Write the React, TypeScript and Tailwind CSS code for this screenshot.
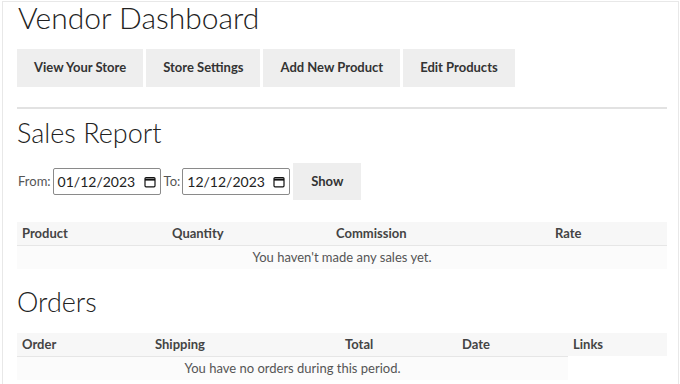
import React from "react";

const font = { fontFamily: "Lato, 'Open Sans', sans-serif" };

function CalendarIcon() {
  return (
    <svg width="12" height="12" viewBox="0 0 12 12" fill="none" stroke="#111" strokeWidth="1.2">
      <rect x="1" y="1.6" width="10" height="9.2" rx="1" />
      <line x1="1" y1="3.6" x2="11" y2="3.6" strokeWidth="2" />
    </svg>
  );
}

function DateBox({ value }: { value: string }) {
  return (
    <div className="flex h-[27px] w-[108px] items-center justify-between rounded-[2px] border border-[#8a8a8a] pl-[4px] pr-[4px] text-[14px] text-[#222]">
      <span>{value}</span>
      <CalendarIcon />
    </div>
  );
}

const navButtons = ["View Your Store", "Store Settings", "Add New Product", "Edit Products"];

export default function App() {
  return (
    <div className="h-[384px] overflow-hidden bg-white" style={font}>
      <div className="ml-[2px] mt-[1px] h-[400px] w-[677px] border border-[#e8e8e8] pl-[14px] pr-[10px]">
        <h1 className="pl-[1px] text-[30px] font-light leading-[30px] text-[#222]">Vendor Dashboard</h1>

        <div className="mt-[17px] flex gap-[3px]">
          {navButtons.map((b) => (
            <div
              key={b}
              className="flex h-[38px] items-center bg-[#eeeeee] px-[17px] text-[13px] font-bold text-[#333]"
            >
              {b}
            </div>
          ))}
        </div>

        <div className="mt-[20px] h-[2px] w-[650px] bg-[#e2e2e2]" />

        <h2 className="mt-[8px] text-[27px] font-light leading-[32px] text-[#222]">Sales Report</h2>

        <div className="mt-[14px] flex items-center text-[13px] text-[#555]">
          <span className="ml-[1px] mr-[2px]">From:</span>
          <DateBox value="01/12/2023" />
          <span className="ml-[3px] mr-[2px]">To:</span>
          <DateBox value="12/12/2023" />
          <div className="ml-[3px] flex h-[37px] w-[68px] items-center justify-center bg-[#eeeeee] font-bold text-[#333]">
            Show
          </div>
        </div>

        <table className="mt-[22px] w-[650px] table-fixed border-collapse text-[13px]">
          <colgroup>
            <col className="w-[150px]" />
            <col className="w-[164px]" />
            <col className="w-[219px]" />
            <col className="w-[117px]" />
          </colgroup>
          <thead>
            <tr className="h-[23px] bg-[#f7f7f7] text-left font-bold text-[#444]">
              <th className="px-[5px]">Product</th>
              <th className="px-[5px]">Quantity</th>
              <th className="px-[5px]">Commission</th>
              <th className="px-[5px]">Rate</th>
            </tr>
          </thead>
          <tbody>
            <tr className="h-[24px] border-t border-[#e6e6e6] bg-[#fbfbfb] text-[#555]">
              <td colSpan={4} className="text-center">
                You haven't made any sales yet.
              </td>
            </tr>
          </tbody>
        </table>

        <h2 className="mt-[17px] text-[27px] font-light leading-[32px] text-[#222]">Orders</h2>

        <table className="mt-[15px] w-[650px] table-fixed border-collapse text-[13px]">
          <colgroup>
            <col className="w-[133px]" />
            <col className="w-[190px]" />
            <col className="w-[117px]" />
            <col className="w-[111px]" />
            <col className="w-[99px]" />
          </colgroup>
          <thead>
            <tr className="h-[23px] bg-[#f7f7f7] text-left font-bold text-[#444]">
              <th className="px-[5px]">Order</th>
              <th className="px-[5px]">Shipping</th>
              <th className="px-[5px]">Total</th>
              <th className="px-[5px]">Date</th>
              <th className="px-[5px]">Links</th>
            </tr>
          </thead>
          <tbody>
            <tr className="h-[24px] text-[#555]">
              <td colSpan={4} className="border-t border-[#e6e6e6] bg-[#fbfbfb] text-center">
                You have no orders during this period.
              </td>
            </tr>
          </tbody>
        </table>
      </div>
    </div>
  );
}
